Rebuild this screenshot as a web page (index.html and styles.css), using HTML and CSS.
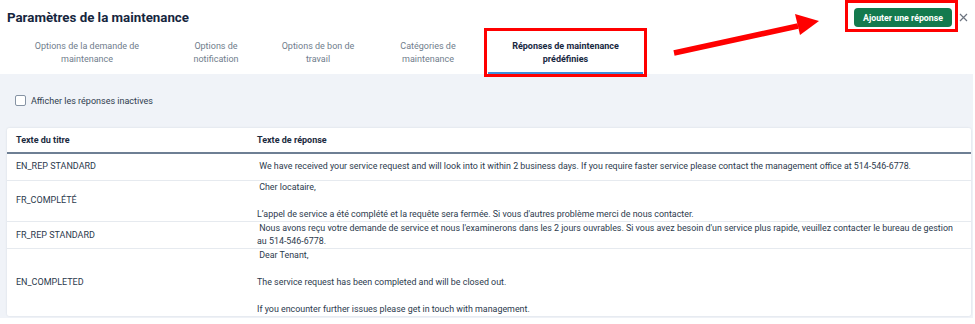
FILE: index.html
```html
<!DOCTYPE html>
<html lang="fr">
<head>
    <title>Paramètres de la maintenance</title>
    <meta charset="UTF-8">
    <meta name="viewport" content="width=device-width, initial-scale=1.0">
    <link rel="stylesheet" href="styles.css">
</head>
<body>
    <header class="top">
        <h1>Paramètres de la maintenance</h1>
        <div class="actions">
            <span class="marked">
                <button class="add">Ajouter une réponse</button>
            </span>
            <button class="close" aria-label="Fermer">
                <svg width="9" height="9" viewBox="0 0 9 9"><path d="M1 1L8 8M8 1L1 8" stroke="#6d7480" stroke-width="1.2"/></svg>
            </button>
        </div>
    </header>

    <nav class="tabs">
        <a class="tab tab-1">Options de la demande de<br>maintenance</a>
        <a class="tab tab-2">Options de<br>notification</a>
        <a class="tab tab-3">Options de bon de<br>travail</a>
        <a class="tab tab-4">Catégories de<br>maintenance</a>
        <a class="tab tab-5 active">Réponses de maintenance<br>prédéfinies</a>
    </nav>

    <!-- annotation arrow pointing at the add button -->
    <svg class="arrow" width="160" height="50" viewBox="0 0 160 50">
        <path d="M2 40 L126 13" stroke="#ff0000" stroke-width="5.5"/>
        <path d="M123 1 L147 8 L128 22 Z" fill="#ff0000"/>
    </svg>

    <main class="panel">
        <label class="toggle">
            <span class="box"></span>
            Afficher les réponses inactives
        </label>

        <section class="card">
            <table>
                <thead>
                    <tr>
                        <th class="col-title">Texte du titre</th>
                        <th>Texte de réponse</th>
                    </tr>
                </thead>
                <tbody>
                    <tr>
                        <td>EN_REP STANDARD</td>
                        <td>&nbsp;We have received your service request and will look into it within 2 business days. If you require faster service please contact the management office at 514-546-6778.</td>
                    </tr>
                    <tr>
                        <td>FR_COMPLÉTÉ</td>
                        <td>&nbsp;Cher locataire,<br><br>L’appel de service a été complété et la requête sera fermée. Si vous d'autres problème merci de nous contacter.</td>
                    </tr>
                    <tr>
                        <td>FR_REP STANDARD</td>
                        <td>&nbsp;Nous avons reçu votre demande de service et nous l'examinerons dans les 2 jours ouvrables. Si vous avez besoin d'un service plus rapide, veuillez contacter le bureau de gestion<br>au 514-546-6778.</td>
                    </tr>
                    <tr>
                        <td>EN_COMPLETED</td>
                        <td>&nbsp;Dear Tenant,<br><br>The service request has been completed and will be closed out.<br><br>If you encounter further issues please get in touch with management.</td>
                    </tr>
                </tbody>
            </table>
        </section>
    </main>
</body>
</html>
```

FILE: styles.css
```css
body {
    margin: 0;
    font-family: Roboto, "Liberation Sans", sans-serif;
    color: #2c3a4d;
    background: #fff;
    width: 975px;
    position: relative;
}
.top {
    display: flex;
    justify-content: space-between;
    align-items: center;
    height: 32px;
    padding: 0 7px 0 7px;
}
h1 {
    margin: 0;
    font-size: 13.3px;
    font-weight: 700;
    color: #15263e;
    padding-top: 2px;
}
.actions {
    display: flex;
    align-items: center;
    height: 32px;
}
.marked {
    display: flex;
    box-sizing: border-box;
    height: 32px;
    padding: 5px 3px 2px 6px;
    border: 3px solid #ff0000;
}
.add {
    background: #147a4e;
    color: #fff;
    border: none;
    border-radius: 4px;
    font-family: inherit;
    font-size: 8.8px;
    font-weight: 700;
    height: 19px;
    width: 98px;
    padding: 0;
    cursor: pointer;
}
.close {
    background: none;
    border: none;
    padding: 3px 0 0 1px;
    display: flex;
    align-items: center;
    cursor: pointer;
}
.tabs {
    display: flex;
    padding-left: 10px;
    height: 42px;
}
.tab {
    display: flex;
    align-items: center;
    justify-content: center;
    text-align: center;
    box-sizing: border-box;
    font-size: 9px;
    line-height: 13px;
    color: #707d8c;
    position: relative;
}
.tab-1 { width: 154px; }
.tab-2 { width: 104px; }
.tab-3 { width: 100px; }
.tab-4 { width: 120px; }
.tab-5 { width: 155px; }
.tab.active {
    color: #17283f;
    font-weight: 700;
    border-bottom: 2px solid #3f8fdc;
    padding-top: 2px;
}
/* red annotation frame */
.tab.active::after {
    content: "";
    position: absolute;
    left: -4px;
    right: -4px;
    top: -4px;
    bottom: -5px;
    border: 3px solid #ff0000;
    z-index: 2;
}
.arrow {
    position: absolute;
    left: 672px;
    top: 13px;
}
.panel {
    background: #f0f3f8;
    width: 973px;
    box-sizing: border-box;
    padding: 20px 2px 2px 7px;
}
.toggle {
    display: flex;
    align-items: center;
    font-size: 9px;
    height: 13px;
    margin-left: 8px;
    margin-bottom: 21px;
    color: #2f3c4e;
}
.box {
    width: 9px;
    height: 9px;
    border: 1px solid #8693a4;
    border-radius: 2px;
    background: #fff;
    margin-right: 5px;
}
.card {
    background: #fff;
    box-shadow: 0 0 2px rgba(40, 60, 90, 0.15);
    border-radius: 2px;
}
table {
    width: 100%;
    border-collapse: collapse;
    font-size: 8.9px;
}
th {
    text-align: left;
    font-weight: 700;
    color: #1c2b40;
    font-size: 9px;
    height: 24px;
    padding: 0 9px;
    border-bottom: 2px solid #6e7f94;
}
.col-title {
    width: 223px;
}
td {
    padding: 0 4px 0 9px;
    line-height: 13.3px;
    height: 26px;
    vertical-align: middle;
    border-bottom: 1px solid #e6eaef;
}
td:first-child {
    font-size: 9px;
}
tbody tr:last-child td {
    border-bottom: none;
}
```
